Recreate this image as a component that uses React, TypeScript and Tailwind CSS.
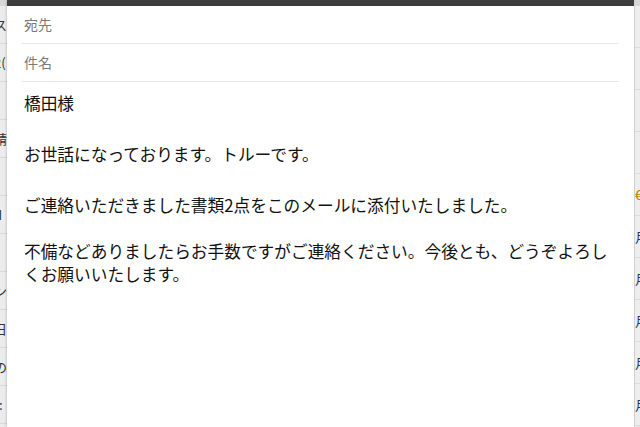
import React from "react";

const leftRows = ["ス", "2(", "", "請", "", "d", "-", "ン", "日", "の", "t:"];
const rightRows = ["", "", "", "", "€", "月", "月", "月", "月", "月"];

export default function App() {
  return (
    <div
      className="flex h-[427px] w-[640px] overflow-hidden bg-white text-[#222]"
      style={{ fontFamily: '"Noto Sans CJK JP", "Noto Sans", sans-serif' }}
    >
      {/* background list, left edge */}
      <div className="flex w-[7px] shrink-0 flex-col overflow-hidden bg-[#ececec] text-[13px] text-[#333]">
        <div className="h-[6px] bg-[#d8d8d8]" />
        {leftRows.map((t, i) => (
          <div key={i} className="flex h-[38px] items-center border-b border-[#d9d9d9] whitespace-nowrap">
            <span className="-ml-[6px]">{t}</span>
          </div>
        ))}
      </div>

      {/* compose window */}
      <div className="flex w-[627px] shrink-0 flex-col shadow-[0_0_3px_rgba(0,0,0,0.25)]">
        <div className="h-[6px] bg-[#3d3d3d]" />
        <div className="mx-[15px] flex h-[38px] items-center border-b border-[#e8e8e8] pl-[2px] text-[14px] text-[#7a7a7a]">
          宛先
        </div>
        <div className="mx-[15px] flex h-[38px] items-center border-b border-[#e8e8e8] pl-[2px] text-[14px] text-[#7a7a7a]">
          件名
        </div>
        <div className="w-[610px] pl-[17px] pt-[10px] text-[16.7px] leading-[23px] text-[#111]">
          <p>橋田様</p>
          <p className="mt-[28px]">お世話になっております。トルーです。</p>
          <p className="mt-[28px]">ご連絡いただきました書類2点をこのメールに添付いたしました。</p>
          <p className="mt-[23px]">
            不備などありましたらお手数ですがご連絡ください。今後とも、どうぞよろしくお願いいたします。
          </p>
        </div>
      </div>

      {/* background list, right edge */}
      <div className="flex w-[6px] shrink-0 flex-col overflow-hidden border-l border-[#d0d0d0] bg-[#ededed] text-[13px] text-[#2a3550]">
        <div className="h-[6px] bg-[#d8d8d8]" />
        {rightRows.map((t, i) => (
          <div key={i} className="flex h-[42px] items-center border-b border-[#dcdcdc] whitespace-nowrap">
            <span className={i === 4 ? "text-[#c77a00]" : ""}>{t}</span>
          </div>
        ))}
      </div>
    </div>
  );
}
